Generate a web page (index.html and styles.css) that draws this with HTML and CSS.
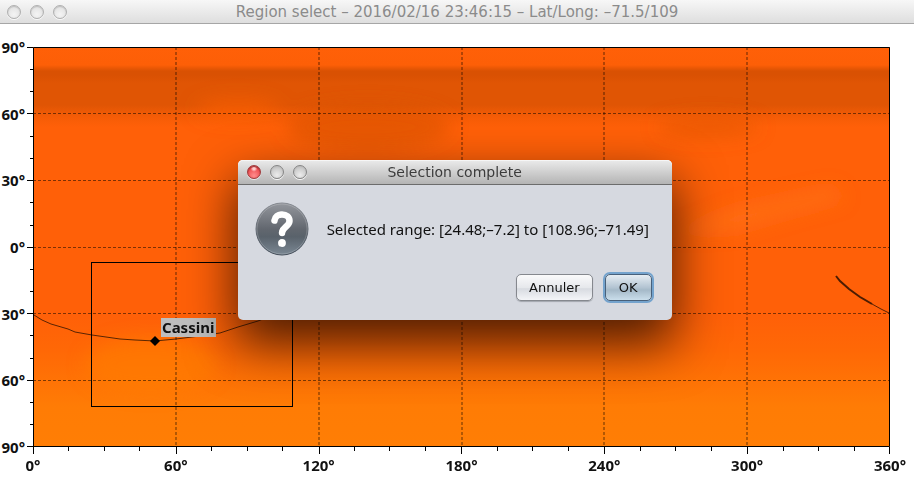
FILE: index.html
```
<!DOCTYPE html>
<html lang="fr">
<head>
<meta charset="utf-8">
<meta name="viewport" content="width=device-width, initial-scale=1">
<title>Region select</title>
<link rel="stylesheet" href="styles.css">
</head>
<body>
<main class="window">
  <header class="titlebar titlebar-inactive">
    <div class="lights">
      <button class="light" type="button" aria-label="Close"></button>
      <button class="light" type="button" aria-label="Minimize"></button>
      <button class="light" type="button" aria-label="Zoom"></button>
    </div>
    <h1 class="title">Region select – 2016/02/16 23:46:15 – Lat/Long: –71.5/109</h1>
  </header>

  <section class="chart">
    <ul class="axis-y">
      <li>90°</li><li>60°</li><li>30°</li><li>0°</li><li>30°</li><li>60°</li><li>90°</li>
    </ul>
    <svg class="plot" viewBox="0 0 857 400" role="img" aria-label="Planet map">
      <defs>
        <linearGradient id="base" x1="0" y1="0" x2="0" y2="1">
          <stop offset="0" stop-color="#ff6008"/>
          <stop offset="0.045" stop-color="#fd5f07"/>
          <stop offset="0.06" stop-color="#d95103"/>
          <stop offset="0.07" stop-color="#d95103"/>
          <stop offset="0.09" stop-color="#e05504"/>
          <stop offset="0.145" stop-color="#e05504"/>
          <stop offset="0.175" stop-color="#f55c06"/>
          <stop offset="0.2" stop-color="#ff6008"/>
          <stop offset="0.67" stop-color="#ff6008"/>
          <stop offset="0.76" stop-color="#ff6806"/>
          <stop offset="0.9" stop-color="#ff7c05"/>
          <stop offset="1" stop-color="#ff7e05"/>
        </linearGradient>
        <filter id="soft" x="-50%" y="-100%" width="200%" height="300%"><feGaussianBlur stdDeviation="9"/></filter>
        <clipPath id="map"><rect width="857" height="400"/></clipPath>
      </defs>
      <rect width="857" height="400" fill="url(#base)"/>
      <g clip-path="url(#map)">
        <g filter="url(#soft)">
          <ellipse cx="335" cy="80" rx="82" ry="22" fill="#d95103" opacity=".6"/>
          <ellipse cx="205" cy="62" rx="42" ry="10" fill="#ff6008" opacity=".6"/>
          <ellipse cx="675" cy="80" rx="50" ry="10" fill="#e05504" opacity=".6"/>
          <path d="M640 186L700 162 800 140 812 152 760 166 700 184Z" fill="#ff7420" opacity=".6"/>
          <ellipse cx="118" cy="318" rx="66" ry="28" fill="#ff7f05" opacity=".6"/>
        </g>
      </g>
      <path class="grid-row" d="M0 66.5H857M0 133.5H857M0 200.5H857M0 266.5H857M0 333.5H857"/>
      <path class="grid-column" d="M143 0V400M286 0V400M429 0V400M571 0V400M714 0V400"/>
      <path class="track" d="M1 268L9 273 18 277 35 282 42 285 59 288 87 292 102 293 122 294 143 292 167 289 187 286 205 280 225 274 245 266"/>
      <path class="track track-dark" d="M803 229L807 234 816 242 827 250 839 257"/>
      <path class="track" d="M839 257L848 262 856 266"/>
      <rect class="selection" x="58.5" y="215.5" width="201" height="144"/>
      <path d="M122 289L127 294 122 299 117 294Z"/>
      <rect class="place-box" x="128" y="271" width="55" height="19"/>
      <text class="place" x="129" y="286">Cassini</text>
      <path class="frame" d="M.5 400V.5H856.5V399.5H0"/>
      <path class="tick" d="M-6 .5H0M-6 66.5H0M-6 133.5H0M-6 200.5H0M-6 266.5H0M-6 333.5H0M-6 399.5H0M-3 22.5H0M-3 44.5H0M-3 89.5H0M-3 111.5H0M-3 155.5H0M-3 178.5H0M-3 222.5H0M-3 244.5H0M-3 288.5H0M-3 311.5H0M-3 355.5H0M-3 377.5H0"/>
      <path class="tick" d="M.5 400V407M143.5 400V407M286.5 400V407M428.5 400V407M571.5 400V407M714.5 400V407M856.5 400V407M35.5 400V404M71.5 400V404M106.5 400V404M178.5 400V404M214.5 400V404M249.5 400V404M321.5 400V404M356.5 400V404M392.5 400V404M464.5 400V404M499.5 400V404M535.5 400V404M607.5 400V404M642.5 400V404M678.5 400V404M750.5 400V404M785.5 400V404M821.5 400V404"/>
    </svg>
    <ul class="axis-x">
      <li>0°</li><li>60°</li><li>120°</li><li>180°</li><li>240°</li><li>300°</li><li>360°</li>
    </ul>
  </section>

  <section class="dialog" role="dialog" aria-labelledby="dialog-title">
    <header class="titlebar titlebar-active">
      <div class="lights">
        <button class="light light-close" type="button" aria-label="Close"></button>
        <button class="light" type="button" aria-label="Minimize"></button>
        <button class="light" type="button" aria-label="Zoom"></button>
      </div>
      <h2 class="title" id="dialog-title">Selection complete</h2>
    </header>
    <div class="dialog-body">
      <svg class="question" viewBox="0 0 54 54" aria-hidden="true">
        <defs>
          <linearGradient id="disc" x1="0" y1="0" x2="0" y2="1">
            <stop offset="0" stop-color="#94979d"/>
            <stop offset="0.5" stop-color="#62676f"/>
            <stop offset="0.65" stop-color="#59626b"/>
            <stop offset="1" stop-color="#7b8894"/>
          </linearGradient>
          <linearGradient id="rim" x1="0" y1="0" x2="0" y2="1">
            <stop offset="0" stop-color="#858990"/>
            <stop offset="1" stop-color="#414b57"/>
          </linearGradient>
        </defs>
        <circle cx="27" cy="27" r="26" fill="url(#disc)" stroke="url(#rim)"/>
        <circle cx="27" cy="27" r="25" fill="none" stroke="#fff" stroke-opacity=".18"/>
        <path d="M19.500 18.500C20 14.500 23 12.500 27 12.500C31.500 12.500 34.500 15 34.500 19C34.500 24.500 27 25 27 31" fill="none" stroke="#fff" stroke-width="6.500" stroke-linecap="round" stroke-linejoin="round"/>
        <circle cx="27" cy="41" r="3.900" fill="#fff"/>
      </svg>
      <p class="message">Selected range: [24.48;–7.2] to [108.96;–71.49]</p>
    </div>
    <footer class="actions">
      <button class="button" type="button">Annuler</button>
      <button class="button button-default" type="button">OK</button>
    </footer>
  </section>
</main>
</body>
</html>
```
FILE: styles.css
```
* {
  box-sizing: border-box;
}

body {
  margin: 0;
  background: #fff;
  color: #111;
  font-family: "DejaVu Sans", "Liberation Sans", sans-serif;
}

.window {
  position: relative;
  min-height: 100vh;
}

/* Title bars */
.titlebar {
  display: grid;
  grid-template-columns: 1fr auto 1fr;
  align-items: center;
  height: 24px;
  padding: 0 7px;
  border-bottom: 1px solid #a6a6a6;
}

.titlebar-inactive {
  background: linear-gradient(#f7f7f7, #dedede);
  color: #8b8b8b;
}

.titlebar-active {
  height: 25px;
  padding: 0 9px;
  border-bottom-color: #6c6c6c;
  border-radius: 5px 5px 0 0;
  background: linear-gradient(#ebebeb, #b4b4b4);
  box-shadow: inset 0 1px #f6f6f6;
  color: #3c3c3c;
}

.title {
  margin: 0;
  font-size: 15px;
  line-height: 20px;
  font-weight: 400;
  white-space: nowrap;
}

.titlebar-active .title {
  font-size: 14px;
}

.lights {
  display: flex;
  gap: 9px;
}

.light {
  width: 14px;
  height: 14px;
  padding: 0;
  border: 1px solid #b0b0b0;
  border-radius: 50%;
  background: radial-gradient(circle at 50% 70%, #f4f4f4, #dcdcdc);
  box-shadow: inset 0 1px 1px #bebebe, 0 1px #f8f8f8;
}

.titlebar-active .light {
  border-color: #858585;
  background: radial-gradient(circle at 50% 75%, #ececec, #b8b8b8);
}

.titlebar-active .light-close {
  border-color: #a13a3c;
  background: radial-gradient(circle at 50% 20%, #ffd0d0 0 10%, transparent 30%), radial-gradient(circle at 50% 80%, #ff8c8c, #e52f34);
  box-shadow: inset 0 1px 1px #9c2f33, 0 1px #e6e6e6;
}

/* Map chart */
.chart {
  display: grid;
  grid-template-columns: 33px 1fr 24px;
  padding-top: 23px;
}

.axis-y,
.axis-x {
  display: flex;
  justify-content: space-between;
  margin: 0;
  padding: 0;
  list-style: none;
  font: 700 15px/16px "Noto Sans", "Liberation Sans", sans-serif;
}

.axis-y {
  flex-direction: column;
  padding-right: 8px;
}

.axis-y li {
  display: flex;
  align-items: center;
  justify-content: flex-end;
  height: 0;
}

.axis-x {
  grid-column: 2;
  padding-top: 10px;
}

.axis-x li {
  display: flex;
  justify-content: center;
  width: 0;
}

.plot {
  display: block;
  width: 100%;
  overflow: visible;
}

.grid-row {
  stroke: rgba(0, 0, 0, 0.5);
  stroke-dasharray: 3 2;
}

.grid-column {
  stroke: rgba(0, 0, 0, 0.3);
  stroke-width: 2px;
  stroke-dasharray: 3 2;
}

.track {
  fill: none;
  stroke: rgba(0, 0, 0, 0.65);
}

.track-dark {
  stroke: #000;
  stroke-width: 2px;
  stroke-opacity: 0.7;
}

.selection,
.frame,
.tick {
  fill: none;
  stroke: #000;
}

.place-box {
  fill: #bebebe;
}

.place {
  font: 700 15px "Noto Sans", "Liberation Sans", sans-serif;
  fill: #111;
}

/* Dialog */
.dialog {
  position: absolute;
  top: 160px;
  left: 26%;
  width: 434px;
  border-radius: 5px;
  background: #d6d9e0;
  box-shadow: 0 22px 50px 2px rgba(0, 0, 0, 0.7);
}

.dialog-body {
  display: flex;
  align-items: center;
  gap: 18px;
  padding: 17px 17px 0;
}

.question {
  flex: none;
  width: 54px;
  height: 54px;
}

.message {
  margin: 0;
  font: 15px/20px "Noto Sans", "Liberation Sans", sans-serif;
  white-space: nowrap;
}

.actions {
  display: flex;
  justify-content: flex-end;
  gap: 12px;
  padding: 18px 20px 19px;
}

.button {
  min-width: 47px;
  height: 27px;
  padding: 0 12px;
  border: 1px solid #85888e;
  border-radius: 5px;
  background: linear-gradient(#fafafb, #e6e8ec 50%, #d8dbe1 55%, #f4f5f8);
  box-shadow: 0 1px 1px #a2a6ad;
  color: #111;
  font: 13px/18px "DejaVu Sans", "Liberation Sans", sans-serif;
}

.button-default {
  border-color: #48607a;
  background: linear-gradient(#e6edf3, #b3c4d2 50%, #a5b9c8 60%, #cadeeb);
  box-shadow: 0 0 0 2px #74a3cd;
}
```
